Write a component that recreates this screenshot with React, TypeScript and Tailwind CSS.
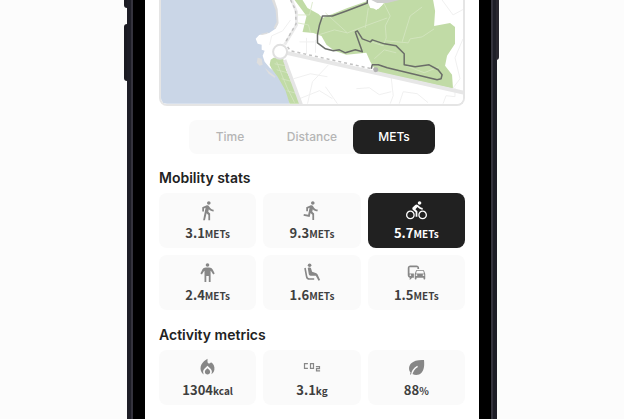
import { useState } from "react";
import type { ReactNode } from "react";
import {
  MdDirectionsWalk,
  MdDirectionsRun,
  MdDirectionsBike,
  MdOutlineCommute,
  MdLocalFireDepartment,
} from "react-icons/md";

type Stat = { id: string; label: string; value: string; unit: string; icon: ReactNode };

function StandingIcon() {
  return (
    <svg viewBox="0 0 21 21" className="size-[21px]" fill="currentColor" aria-hidden="true">
      <circle cx="10.5" cy="3" r="1.8" />
      <path d="M9 5.500h3c2.200 0 3.400 1 4.200 3l1.500 3-1.500.9-1.700-2.700c-.2-.4-.5-.7-.9-.9V20h-1.800v-6H9.300v6H7.500V8.800c-.4.2-.7.500-.9.900l-1.700 2.700-1.500-.9 1.500-3C5.600 6.500 6.800 5.500 9 5.500z" />
    </svg>
  );
}

function SittingIcon() {
  return (
    <svg viewBox="0 0 21 21" className="size-[21px]" fill="currentColor" aria-hidden="true">
      <circle cx="8.600" cy="3.200" r="1.800" />
      <path d="M6.800 6.200c.3-.8 2.800-.8 3.200 0l1.100 3.600 3.600 1.100c1 .3 1.500.8 1.900 1.700l2.500 5.300-1.600.8-2.700-5H9.600c-1 0-1.600-.5-1.800-1.400z" />
      <path fill="none" stroke="currentColor" strokeWidth="1.600" strokeLinejoin="round" d="M4 6l1.600 8.500c.3 1.700 1.200 2.500 2.800 2.500h4.800" />
    </svg>
  );
}

function Co2Icon() {
  return (
    <svg viewBox="0 0 18 10" className="h-[10px] w-[18px]" fill="none" stroke="currentColor" strokeWidth="1.2" aria-hidden="true">
      <path d="M4.900 1.600H1.500V6.400H4.900M7.500 1.600H10.500V6.400H7.500ZM12.900 4.600H16.500V6.700H13.500V8.900H17.100" />
    </svg>
  );
}

function LeafIcon() {
  return (
    <svg viewBox="0 0 21 21" className="size-[21px]" aria-hidden="true">
      <path fill="currentColor" d="M18 3c.5 5.500.2 9.800-2.500 12.700-2.300 2.500-6.200 2.900-9 1.200L5 18l-1-1 .6-1.200C2.400 13 2.600 9.200 5 6.600 7.800 3.600 12.300 2.700 18 3z" />
      <path fill="none" stroke="#fafafa" strokeWidth="1.500" d="M5.600 18.200c.5-3.800 2.400-6.800 6-8.900" />
    </svg>
  );
}

const mobility: Stat[] = [
  { id: "walk", label: "Walking", value: "3.1", unit: "METs", icon: <MdDirectionsWalk size={21} /> },
  { id: "run", label: "Running", value: "9.3", unit: "METs", icon: <MdDirectionsRun size={21} /> },
  { id: "bike", label: "Cycling", value: "5.7", unit: "METs", icon: <MdDirectionsBike size={21} /> },
  { id: "stand", label: "Standing", value: "2.4", unit: "METs", icon: <StandingIcon /> },
  { id: "sit", label: "Sitting", value: "1.6", unit: "METs", icon: <SittingIcon /> },
  { id: "commute", label: "Commuting", value: "1.5", unit: "METs", icon: <MdOutlineCommute size={21} /> },
];

const activity: Stat[] = [
  { id: "energy", label: "Energy", value: "1304", unit: "kcal", icon: <MdLocalFireDepartment size={21} /> },
  { id: "co2", label: "Carbon dioxide", value: "3.1", unit: "kg", icon: <Co2Icon /> },
  { id: "eco", label: "Eco score", value: "88", unit: "%", icon: <LeafIcon /> },
];

function StatContent({ stat, active = false }: { stat: Stat; active?: boolean }) {
  return (
    <>
      <span className={active ? "flex h-[21px] items-center text-white" : "flex h-[21px] items-center text-[#878787]"}>
        {stat.icon}
      </span>
      <span className={active ? "text-[13px] leading-6 font-bold text-white" : "text-[13px] leading-6 font-bold text-[#3f3f3f]"}>
        {stat.value}
        <span className="text-[10px]">{stat.unit}</span>
      </span>
    </>
  );
}

function RouteMap() {
  return (
    <div className="overflow-hidden rounded-b-lg border-2 border-t-0 border-[#e5e5e5]">
      <svg viewBox="160 0 303 104" className="block w-full" fill="none" role="img" aria-label="Route map">
        <path fill="#fff" d="M160 0h303v104H160z" />
        <path fill="#cad6e7" d="M160 0h112l4 9 1.500 15-3 5-6 4-10 2-3.500 4 2 5 4 1 0 5 3 1-2 5 2 6 5 6 8 6 4 7 5 6 3 17H160z" />
        <path fill="#dedede" d="M271 0h3l3 9 1 14-3 6-2-1 3-6-1-12zM260 34l8-2-2 2-5 1zM257 58l4 1 1 6-3 1-3-3zM264 68l6 5 5 4-1 1-6-4z" />
        <g fill="#c1dba6">
          <path d="M270 60l3-2h8l4 4v7l4 9 11 26h-11l-4-13-8-14-6-8-2-4z" />
          <path d="M294 0h8l5 8 11 6 4 4 25-10 20-7 3 7 8 1 5-5 5-4h45l2 11-1 15 16-3 5 4v17l-8 12-2 10 7 9 1 14-77-17-6-10-4-9-20 2-12-4-8-6-5-9-8-3-11-1 4-16z" />
        </g>
        <g stroke="#d5e6c3" strokeWidth=".8">
          <path d="M297 15h12l3-13M297 23l11 2 2 8M318 35l16-5 13 3-22-20M347 33l18-7 22-8M365 28l3-20M382 0l8 16-5 10 1 12-3 8-18-6M402 42l8-26 12-9M386 41l22 2 2-4 12-2 12-8M374 59l10-9 12 3M406 66l18 7 15-6M274 64l11 2M276 70l11 3M281 79l11 3M286 91l11 3M276 62l6 15 5 12 7 14" />
        </g>
        <g stroke="#f0f0f0" strokeWidth="1">
          <path d="M306 38v16M299 42h15M315 40v13M293 79l17-5 17 3M299 99l20-8 13 8M307 104l5-22 16-17M325 87l12 17M356 89l13-1 10 7 12-3M391 78l2 18-3 8M399 104l4-12 14 2 11 9M442 0l11 15 11-6M463 39l-8 19 5 21-9 12M443 104l3-8 9 1v-9M269 45l2-9 11-5 8-11" />
        </g>
        <path stroke="#e5e5e5" strokeWidth="3.500" d="M284 60l17 46" />
        <path stroke="#e7e7e7" strokeWidth="4" d="M286 53L464 93" />
        <path stroke="#ebebeb" strokeWidth="3" d="M291 0l5 12v13l-12 20" />
        <path stroke="#c2c2c2" strokeWidth="1.500" strokeDasharray="3 3" d="M290 0l5 10 .5 14-11 19M287 47l3 4 86 19" />
        <circle cx="279.500" cy="52" r="7" fill="#fff" stroke="#e0e0e0" strokeWidth="2" />
        <path fill="#fff" d="M369 0l1 6 6 4 6-5v-5z" />
        <path fill="#cfcfcf" d="M371 0h28l-12 3h-10z" />
        <path stroke="#6a6d68" strokeWidth="1.500" strokeLinejoin="round" d="M367 0v3l-21 8-14 5h-10l-3 9-2 10v8l8 6 8 2 6-1 6 3 10-3 7 2-7-20 2-1 5 8 8 3 2-2 12 4 12 2 8 8v11l11 2 14-2 9 5 4 5-1 4-4 1-50-12-9-3h-6l-1 4" />
        <circle cx="375.500" cy="70" r="2.500" fill="#b0b0b0" />
      </svg>
    </div>
  );
}

const headingClass = "mb-[5px] text-[14px] leading-5 font-semibold text-[#222]";
const cardClass = "flex h-[55px] flex-col items-center rounded-lg pt-[7px]";

export default function App() {
  const [tab, setTab] = useState("METs");
  const [selected, setSelected] = useState("bike");
  return (
    <div className="flex h-screen justify-center overflow-hidden bg-[#fcfcfc] font-['Inter',sans-serif]">
      <div className="relative w-full max-w-[370px] self-stretch border-x-4 border-[#1e1e27]">
        <span className="absolute top-0 -left-[7px] h-2 w-[3px] rounded-bl-sm bg-[#1b1b22]" />
        <span className="absolute top-6 -left-[7px] h-[57px] w-[3px] rounded-l-sm bg-[#1b1b22]" />
        <span className="absolute top-0 -right-[6px] h-[60px] w-[3px] rounded-br-sm bg-[#29272f]" />
        <div className="h-full border-x-2 border-[#34333d] bg-black px-3">
          <main className="h-full overflow-hidden bg-white px-3.5">
            <RouteMap />
            <div className="mx-[30px] mt-3.5 grid grid-cols-3 rounded-lg bg-[#fafafa]" role="tablist">
              {["Time", "Distance", "METs"].map((name) => (
                <button
                  key={name}
                  type="button"
                  role="tab"
                  aria-selected={tab === name}
                  onClick={() => setTab(name)}
                  className={
                    tab === name
                      ? "h-[34px] rounded-lg bg-[#212121] text-[12px] font-medium text-white"
                      : "h-[34px] rounded-lg text-[12px] font-medium text-[#b5b5b5]"
                  }
                >
                  {name}
                </button>
              ))}
            </div>
            <section className="mt-3.5">
              <h2 className={headingClass}>Mobility stats</h2>
              <div className="grid grid-cols-3 gap-[7px] font-['Noto_Sans_CJK_JP',sans-serif]">
                {mobility.map((stat) => (
                  <button
                    key={stat.id}
                    type="button"
                    aria-label={`${stat.label} ${stat.value} ${stat.unit}`}
                    aria-pressed={selected === stat.id}
                    onClick={() => setSelected(stat.id)}
                    className={`${cardClass} ${selected === stat.id ? "bg-[#212121]" : "bg-[#fafafa]"}`}
                  >
                    <StatContent stat={stat} active={selected === stat.id} />
                  </button>
                ))}
              </div>
            </section>
            <section className="mt-[15px]">
              <h2 className={headingClass}>Activity metrics</h2>
              <div className="grid grid-cols-3 gap-[7px] font-['Noto_Sans_CJK_JP',sans-serif]">
                {activity.map((stat) => (
                  <div key={stat.id} className={`${cardClass} bg-[#fafafa]`}>
                    <StatContent stat={stat} />
                  </div>
                ))}
              </div>
            </section>
          </main>
        </div>
      </div>
    </div>
  );
}
